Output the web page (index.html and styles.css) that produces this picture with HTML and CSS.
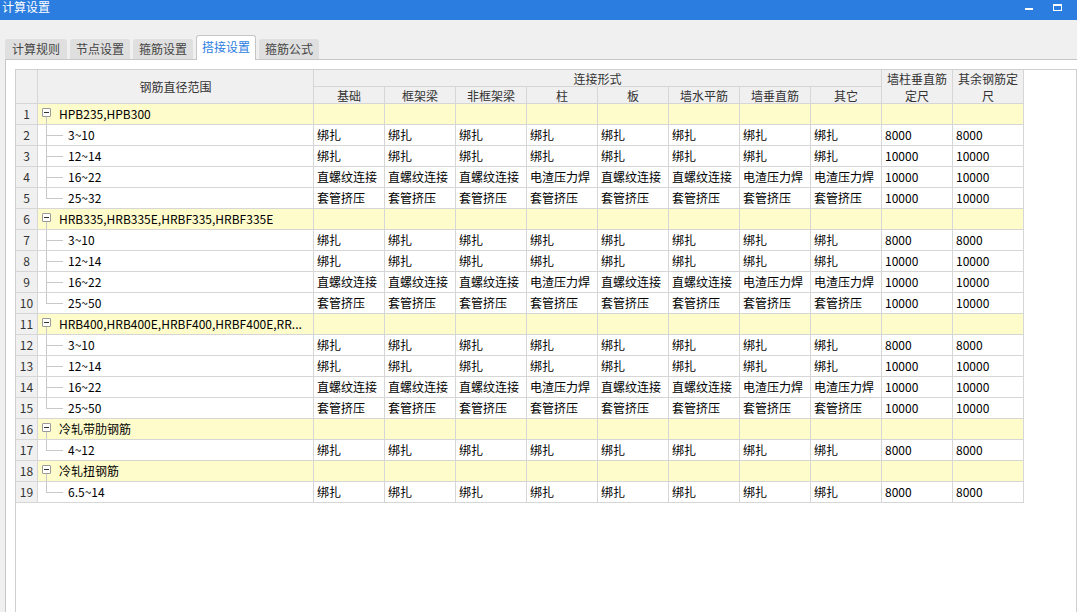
FILE: index.html
```html
<!DOCTYPE html>
<html lang="zh-CN">
<head>
<meta charset="utf-8">
<title>计算设置</title>
<link rel="stylesheet" href="styles.css">
</head>
<body>
<div class="titlebar">
  <div class="title">计算设置</div>
  <div class="controls"><span class="min"></span><span class="max"></span></div>
</div>
<div class="tabs">
  <div class="tab first">计算规则</div>
  <div class="tab">节点设置</div>
  <div class="tab">箍筋设置</div>
  <div class="tab active">搭接设置</div>
  <div class="tab">箍筋公式</div>
</div>
<div class="panel">
  <div class="gridbox">
    <div class="grid">
      <div class="h corner"></div>
      <div class="h hname">钢筋直径范围</div>
      <div class="h hgroup">连接形式</div>
      <div class="h htall c11">墙柱垂直筋定尺</div>
      <div class="h htall c12">其余钢筋定尺</div>
      <div class="h">基础</div>
      <div class="h">框架梁</div>
      <div class="h">非框架梁</div>
      <div class="h">柱</div>
      <div class="h">板</div>
      <div class="h">墙水平筋</div>
      <div class="h">墙垂直筋</div>
      <div class="h">其它</div>

      <!-- 1 -->
      <div class="n">1</div>
      <div class="c grp"><span class="box"></span><span class="gt">HPB235,HPB300</span></div>
      <div class="c g"></div><div class="c g"></div><div class="c g"></div><div class="c g"></div><div class="c g"></div><div class="c g"></div><div class="c g"></div><div class="c g"></div><div class="c g"></div><div class="c g"></div>
      <!-- 2 -->
      <div class="n">2</div>
      <div class="c leaf"><span class="branch"></span>3~10</div>
      <div class="c">绑扎</div><div class="c">绑扎</div><div class="c">绑扎</div><div class="c">绑扎</div><div class="c">绑扎</div><div class="c">绑扎</div><div class="c">绑扎</div><div class="c">绑扎</div><div class="c">8000</div><div class="c">8000</div>
      <!-- 3 -->
      <div class="n">3</div>
      <div class="c leaf"><span class="branch"></span>12~14</div>
      <div class="c">绑扎</div><div class="c">绑扎</div><div class="c">绑扎</div><div class="c">绑扎</div><div class="c">绑扎</div><div class="c">绑扎</div><div class="c">绑扎</div><div class="c">绑扎</div><div class="c">10000</div><div class="c">10000</div>
      <!-- 4 -->
      <div class="n">4</div>
      <div class="c leaf"><span class="branch"></span>16~22</div>
      <div class="c">直螺纹连接</div><div class="c">直螺纹连接</div><div class="c">直螺纹连接</div><div class="c">电渣压力焊</div><div class="c">直螺纹连接</div><div class="c">直螺纹连接</div><div class="c">电渣压力焊</div><div class="c">电渣压力焊</div><div class="c">10000</div><div class="c">10000</div>
      <!-- 5 -->
      <div class="n">5</div>
      <div class="c leaf"><span class="branch last"></span>25~32</div>
      <div class="c">套管挤压</div><div class="c">套管挤压</div><div class="c">套管挤压</div><div class="c">套管挤压</div><div class="c">套管挤压</div><div class="c">套管挤压</div><div class="c">套管挤压</div><div class="c">套管挤压</div><div class="c">10000</div><div class="c">10000</div>

      <!-- 6 -->
      <div class="n">6</div>
      <div class="c grp"><span class="box"></span><span class="gt">HRB335,HRB335E,HRBF335,HRBF335E</span></div>
      <div class="c g"></div><div class="c g"></div><div class="c g"></div><div class="c g"></div><div class="c g"></div><div class="c g"></div><div class="c g"></div><div class="c g"></div><div class="c g"></div><div class="c g"></div>
      <!-- 7 -->
      <div class="n">7</div>
      <div class="c leaf"><span class="branch"></span>3~10</div>
      <div class="c">绑扎</div><div class="c">绑扎</div><div class="c">绑扎</div><div class="c">绑扎</div><div class="c">绑扎</div><div class="c">绑扎</div><div class="c">绑扎</div><div class="c">绑扎</div><div class="c">8000</div><div class="c">8000</div>
      <!-- 8 -->
      <div class="n">8</div>
      <div class="c leaf"><span class="branch"></span>12~14</div>
      <div class="c">绑扎</div><div class="c">绑扎</div><div class="c">绑扎</div><div class="c">绑扎</div><div class="c">绑扎</div><div class="c">绑扎</div><div class="c">绑扎</div><div class="c">绑扎</div><div class="c">10000</div><div class="c">10000</div>
      <!-- 9 -->
      <div class="n">9</div>
      <div class="c leaf"><span class="branch"></span>16~22</div>
      <div class="c">直螺纹连接</div><div class="c">直螺纹连接</div><div class="c">直螺纹连接</div><div class="c">电渣压力焊</div><div class="c">直螺纹连接</div><div class="c">直螺纹连接</div><div class="c">电渣压力焊</div><div class="c">电渣压力焊</div><div class="c">10000</div><div class="c">10000</div>
      <!-- 10 -->
      <div class="n">10</div>
      <div class="c leaf"><span class="branch last"></span>25~50</div>
      <div class="c">套管挤压</div><div class="c">套管挤压</div><div class="c">套管挤压</div><div class="c">套管挤压</div><div class="c">套管挤压</div><div class="c">套管挤压</div><div class="c">套管挤压</div><div class="c">套管挤压</div><div class="c">10000</div><div class="c">10000</div>

      <!-- 11 -->
      <div class="n">11</div>
      <div class="c grp"><span class="box"></span><span class="gt">HRB400,HRB400E,HRBF400,HRBF400E,RR...</span></div>
      <div class="c g"></div><div class="c g"></div><div class="c g"></div><div class="c g"></div><div class="c g"></div><div class="c g"></div><div class="c g"></div><div class="c g"></div><div class="c g"></div><div class="c g"></div>
      <!-- 12 -->
      <div class="n">12</div>
      <div class="c leaf"><span class="branch"></span>3~10</div>
      <div class="c">绑扎</div><div class="c">绑扎</div><div class="c">绑扎</div><div class="c">绑扎</div><div class="c">绑扎</div><div class="c">绑扎</div><div class="c">绑扎</div><div class="c">绑扎</div><div class="c">8000</div><div class="c">8000</div>
      <!-- 13 -->
      <div class="n">13</div>
      <div class="c leaf"><span class="branch"></span>12~14</div>
      <div class="c">绑扎</div><div class="c">绑扎</div><div class="c">绑扎</div><div class="c">绑扎</div><div class="c">绑扎</div><div class="c">绑扎</div><div class="c">绑扎</div><div class="c">绑扎</div><div class="c">10000</div><div class="c">10000</div>
      <!-- 14 -->
      <div class="n">14</div>
      <div class="c leaf"><span class="branch"></span>16~22</div>
      <div class="c">直螺纹连接</div><div class="c">直螺纹连接</div><div class="c">直螺纹连接</div><div class="c">电渣压力焊</div><div class="c">直螺纹连接</div><div class="c">直螺纹连接</div><div class="c">电渣压力焊</div><div class="c">电渣压力焊</div><div class="c">10000</div><div class="c">10000</div>
      <!-- 15 -->
      <div class="n">15</div>
      <div class="c leaf"><span class="branch last"></span>25~50</div>
      <div class="c">套管挤压</div><div class="c">套管挤压</div><div class="c">套管挤压</div><div class="c">套管挤压</div><div class="c">套管挤压</div><div class="c">套管挤压</div><div class="c">套管挤压</div><div class="c">套管挤压</div><div class="c">10000</div><div class="c">10000</div>

      <!-- 16 -->
      <div class="n">16</div>
      <div class="c grp"><span class="box"></span><span class="gt">冷轧带肋钢筋</span></div>
      <div class="c g"></div><div class="c g"></div><div class="c g"></div><div class="c g"></div><div class="c g"></div><div class="c g"></div><div class="c g"></div><div class="c g"></div><div class="c g"></div><div class="c g"></div>
      <!-- 17 -->
      <div class="n">17</div>
      <div class="c leaf"><span class="branch last"></span>4~12</div>
      <div class="c">绑扎</div><div class="c">绑扎</div><div class="c">绑扎</div><div class="c">绑扎</div><div class="c">绑扎</div><div class="c">绑扎</div><div class="c">绑扎</div><div class="c">绑扎</div><div class="c">8000</div><div class="c">8000</div>

      <!-- 18 -->
      <div class="n">18</div>
      <div class="c grp"><span class="box"></span><span class="gt">冷轧扭钢筋</span></div>
      <div class="c g"></div><div class="c g"></div><div class="c g"></div><div class="c g"></div><div class="c g"></div><div class="c g"></div><div class="c g"></div><div class="c g"></div><div class="c g"></div><div class="c g"></div>
      <!-- 19 -->
      <div class="n">19</div>
      <div class="c leaf"><span class="branch last"></span>6.5~14</div>
      <div class="c">绑扎</div><div class="c">绑扎</div><div class="c">绑扎</div><div class="c">绑扎</div><div class="c">绑扎</div><div class="c">绑扎</div><div class="c">绑扎</div><div class="c">绑扎</div><div class="c">8000</div><div class="c">8000</div>
    </div>
  </div>
</div>
</body>
</html>
```
FILE: styles.css
```css
* { box-sizing: border-box; }

html, body {
  margin: 0;
  width: 1077px;
  height: 612px;
  overflow: hidden;
}

body {
  background: #f0f0f0;
  font-family: "Noto Sans CJK SC", "Noto Sans", sans-serif;
  font-size: 12px;
  color: #000;
}

/* title bar */
.titlebar {
  height: 20px;
  background: #2b7ee0;
  color: #fff;
  display: flex;
  justify-content: space-between;
  align-items: flex-start;
}
.title {
  padding: 0 0 0 2px;
  line-height: 14px;
}
.controls {
  display: flex;
  align-items: flex-start;
  gap: 20px;
  padding: 4px 15px 0 0;
}
.min {
  width: 8px;
  height: 2px;
  margin-top: 4px;
  background: #fff;
}
.max {
  width: 9px;
  height: 7px;
  border: 1px solid #fff;
  border-top-width: 2px;
}

/* tabs */
.tabs {
  display: flex;
  align-items: flex-end;
  gap: 3px;
  height: 25px;
  margin-top: 15px;
  margin-bottom: -1px;
  padding-left: 5px;
}
.tab {
  width: 60px;
  height: 20px;
  margin-bottom: 1px;
  background: #dfdfdf;
  color: #444;
  border-radius: 3px 3px 0 0;
  display: flex;
  align-items: center;
  justify-content: center;
  line-height: 16px;
}
.tab.first { width: 62px; }
.tab.active {
  position: relative;
  z-index: 1;
  height: 25px;
  margin-bottom: 0;
  background: #fff;
  color: #2b7ee0;
  border: 1px solid #c6c6c6;
  border-bottom: none;
  padding-bottom: 2px;
}

/* panel */
.panel {
  width: 1082px;
  height: 560px;
  margin-left: 5px;
  border: 1px solid #c6c6c6;
  background: #fff;
  padding: 9px;
}
.gridbox {
  width: 1062px;
  height: 560px;
  border: 1px solid #d0d0d0;
  background: #fff;
}

/* grid */
.grid {
  display: grid;
  width: max-content;
  grid-template-columns: 21px 275px repeat(10, 70px);
  grid-template-rows: 16px 16px repeat(19, 20px);
  gap: 1px;
  background: #d6d6d6;
  border-right: 1px solid #d6d6d6;
  border-bottom: 1px solid #d6d6d6;
}

.h {
  background: #f0f0f0;
  color: #333;
  display: flex;
  align-items: center;
  justify-content: center;
  text-align: center;
  line-height: 17px;
}
.corner { grid-row: 1 / 3; grid-column: 1; }
.hname { grid-row: 1 / 3; grid-column: 2; }
.hgroup { grid-row: 1; grid-column: 3 / 11; }
.htall { grid-row: 1 / 3; }
.c11 { grid-column: 11; }
.c12 { grid-column: 12; }

.n {
  background: #f0f0f0;
  color: #333;
  text-align: center;
  line-height: 20px;
}

.c {
  background: #fff;
  padding-left: 3px;
  line-height: 20px;
  white-space: nowrap;
  overflow: hidden;
}
.g { background: #fffccc; }

.grp {
  display: flex;
  align-items: flex-start;
  padding-left: 4px;
  background:
    linear-gradient(#c8c8c8, #c8c8c8) 8px 13px / 1px 100% no-repeat,
    #fffccc;
}
.box {
  flex: none;
  width: 9px;
  height: 9px;
  margin-top: 4px;
  margin-right: 8px;
  border: 1px solid #9a9a9a;
  border-radius: 1px;
  background: linear-gradient(#333, #333) center / 5px 1px no-repeat, #fff;
}
.gt {
  min-width: 0;
  overflow: hidden;
  text-overflow: ellipsis;
  white-space: nowrap;
}

.leaf {
  display: flex;
  padding-left: 8px;
}
.branch {
  flex: none;
  width: 17px;
  margin-right: 5px;
  background:
    linear-gradient(#c8c8c8, #c8c8c8) 0 0 / 1px 100% no-repeat,
    linear-gradient(#c8c8c8, #c8c8c8) 0 50% / 100% 1px no-repeat;
}
.branch.last {
  background:
    linear-gradient(#c8c8c8, #c8c8c8) 0 0 / 1px 50% no-repeat,
    linear-gradient(#c8c8c8, #c8c8c8) 0 50% / 100% 1px no-repeat;
}
```
